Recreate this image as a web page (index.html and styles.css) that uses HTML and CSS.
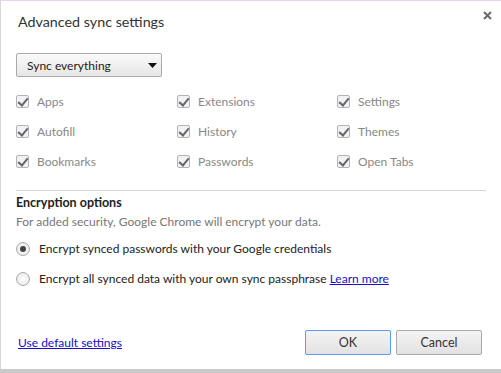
FILE: index.html
```html
<!DOCTYPE html>
<html lang="en">
<head>
  <meta charset="UTF-8" />
  <title>Advanced sync settings</title>
  <link rel="stylesheet" href="styles.css">
</head>
<body>
  <div class="dialog">
    <div class="dialog-head">
      <h1>Advanced sync settings</h1>
      <button class="close" aria-label="Close">
        <svg width="9" height="9" viewBox="0 0 9 9">
          <path d="M1 1 L8 8 M8 1 L1 8" stroke="#6b6b6b" stroke-width="2" />
        </svg>
      </button>
    </div>

    <div class="sync-select">
      <span>Sync everything</span>
      <svg width="9" height="5" viewBox="0 0 9 5"><path d="M0 0 H9 L4.5 5 Z" fill="#111" /></svg>
    </div>

    <div class="datatypes">
      <label class="check"><span class="box"></span>Apps</label>
      <label class="check"><span class="box"></span>Extensions</label>
      <label class="check"><span class="box"></span>Settings</label>
      <label class="check"><span class="box"></span>Autofill</label>
      <label class="check"><span class="box"></span>History</label>
      <label class="check"><span class="box"></span>Themes</label>
      <label class="check"><span class="box"></span>Bookmarks</label>
      <label class="check"><span class="box"></span>Passwords</label>
      <label class="check"><span class="box"></span>Open Tabs</label>
    </div>

    <div class="separator"></div>

    <div class="encryption">
      <h2>Encryption options</h2>
      <p class="hint">For added security, Google Chrome will encrypt your data.</p>
      <label class="radio"><span class="dot checked"></span>Encrypt synced passwords with your Google credentials</label>
      <label class="radio"><span class="dot"></span>Encrypt all synced data with your own sync passphrase <a href="#">Learn more</a></label>
    </div>

    <div class="dialog-foot">
      <a href="#" class="defaults">Use default settings</a>
      <div class="buttons">
        <button class="btn btn-ok">OK</button>
        <button class="btn">Cancel</button>
      </div>
    </div>
  </div>
</body>
</html>
```

FILE: styles.css
```css
* {
  box-sizing: border-box;
  margin: 0;
  padding: 0;
}
body {
  width: 501px;
  height: 373px;
  font-family: Lato, 'Open Sans', sans-serif;
  font-size: 12px;
  color: #222;
  background: #c9c9c9;
}
.dialog {
  height: 369px;
  background: #fff;
  border-top: 1px solid #ecd4ec;
  border-left: 1px solid #d6d6d6;
  padding: 0 15px;
  display: flex;
  flex-direction: column;
}
.dialog-head {
  display: flex;
  justify-content: space-between;
  align-items: flex-start;
  height: 52px;
}
.dialog-head h1 {
  font-size: 14.3px;
  font-weight: normal;
  color: #333;
  margin: 11px 0 0 2px;
  line-height: 20px;
}
.close {
  border: none;
  background: none;
  margin: 10px -6px 0 0;
  width: 9px;
  height: 9px;
  display: flex;
}
.sync-select {
  width: 146px;
  height: 24px;
  border: 1px solid #aaa;
  border-radius: 2px;
  background: linear-gradient(#fafafa, #e6e6e6);
  display: flex;
  align-items: center;
  justify-content: space-between;
  padding: 0 4px 0 10px;
  color: #222;
}
.datatypes {
  display: grid;
  grid-template-columns: 161px 160px 150px;
  grid-auto-rows: 30px;
  margin-top: 17px;
  color: #888;
}
.check {
  display: flex;
  align-items: center;
  height: 15px;
}
.box {
  width: 13px;
  height: 13px;
  border: 1px solid #b6b0bc;
  border-radius: 2px;
  background: #f2f2f2;
  margin-right: 8px;
  position: relative;
}
.box::after {
  content: "";
  position: absolute;
  left: 3px;
  top: 0;
  width: 4px;
  height: 8px;
  border: solid #666;
  border-width: 0 2px 2px 0;
  transform: rotate(40deg);
}
.separator {
  height: 1px;
  background: #d4dad0;
  margin-top: 6px;
  width: 470px;
}
.encryption h2 {
  font-size: 12.5px;
  font-weight: bold;
  margin-top: 3px;
  line-height: 18px;
}
.hint {
  color: #777;
  line-height: 18px;
  margin-top: 1px;
}
.radio {
  display: flex;
  align-items: center;
  margin-top: 9px;
  line-height: 18px;
}
.radio + .radio {
  margin-top: 12px;
}
.dot {
  width: 14px;
  height: 14px;
  border-radius: 50%;
  border: 1px solid #aaa;
  background: radial-gradient(circle, #fff 0, #ececec 70%);
  margin-right: 9px;
  position: relative;
}
.dot.checked::after {
  content: "";
  position: absolute;
  left: 3px;
  top: 3px;
  width: 6px;
  height: 6px;
  border-radius: 50%;
  background: #444;
}
.radio a {
  color: #1a0dcc;
  margin-left: 3px;
}
.dialog-foot {
  margin-top: auto;
  display: flex;
  justify-content: space-between;
  align-items: center;
  margin-bottom: 14px;
}
.defaults {
  color: #1a0dcc;
  margin-left: 2px;
}
.buttons {
  display: flex;
  gap: 5px;
  margin-right: 4px;
}
.btn {
  width: 86px;
  height: 25px;
  font-family: inherit;
  font-size: 12.5px;
  color: #333;
  border: 1px solid #aaa;
  border-radius: 2px;
  background: linear-gradient(#f4f4f4, #e2e2e2);
}
.btn-ok {
  border-color: #5b9bf0;
}
```
